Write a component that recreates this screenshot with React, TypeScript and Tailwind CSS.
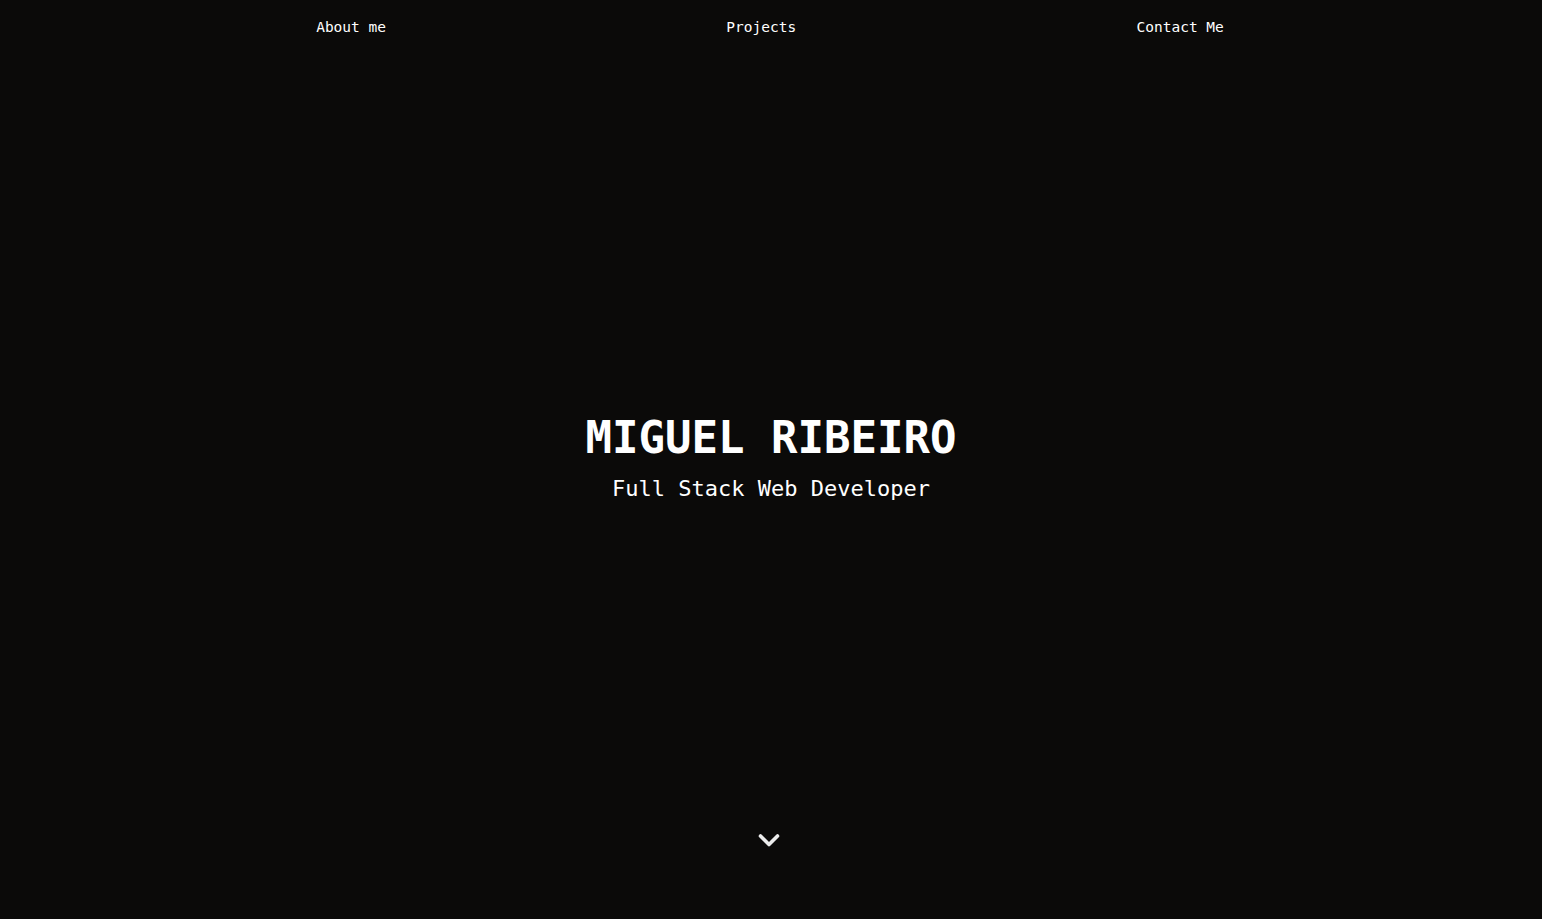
import { useState } from 'react';

const links = ['About me', 'Projects', 'Contact Me'];

export default function App() {
  const [active, setActive] = useState<string | null>(null);

  return (
    <div
      className="h-screen bg-[#0b0a09] text-white flex flex-col overflow-hidden"
      style={{ fontFamily: '"DejaVu Sans Mono", "Liberation Mono", monospace' }}
    >
      {/* nav */}
      <nav className="h-[110px] shrink-0">
        <ul className="w-[1250px] mx-auto pr-[2px] flex justify-around pt-[15px]">
          {links.map((label) => (
            <li key={label}>
              <a
                href="#"
                onClick={(e) => {
                  e.preventDefault();
                  setActive(label);
                }}
                className={`text-[14.5px] leading-[20px] ${active === label ? 'text-neutral-300' : 'text-white'}`}
              >
                {label}
              </a>
            </li>
          ))}
        </ul>
      </nav>

      {/* hero */}
      <main className="flex-1 flex flex-col items-center justify-center pb-[4px]">
        <h1 className="text-[44px] leading-[52px] font-bold">MIGUEL RIBEIRO</h1>
        <p className="text-[22px] leading-[30px] mt-[10px]">Full Stack Web Developer</p>
      </main>

      {/* scroll hint */}
      <div className="h-[110px] shrink-0 flex justify-center pt-[22px] pr-[4px]">
        <button className="w-[24px] h-[18px] flex items-center justify-center text-[#ececec]">
          <svg width="22" height="15" viewBox="0 0 22 15" fill="none">
            <polyline
              points="2.5,3 11,11.5 19.5,3"
              stroke="currentColor"
              strokeWidth="3.6"
              strokeLinecap="round"
              strokeLinejoin="round"
            />
          </svg>
        </button>
      </div>
    </div>
  );
}
